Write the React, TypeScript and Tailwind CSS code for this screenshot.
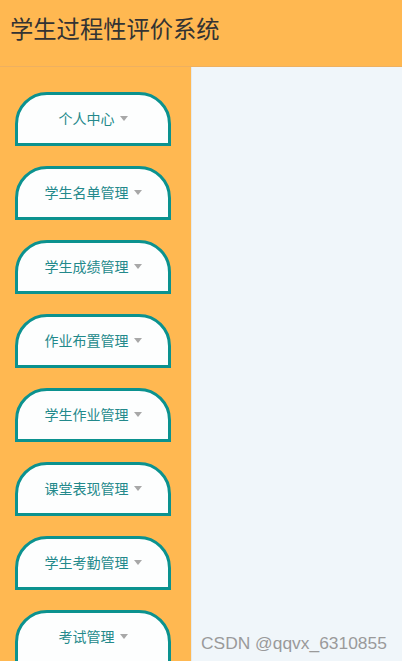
import { useState } from 'react';

const menus = [
  '个人中心',
  '学生名单管理',
  '学生成绩管理',
  '作业布置管理',
  '学生作业管理',
  '课堂表现管理',
  '学生考勤管理',
  '考试管理',
];

function MenuButton({ label }: { label: string }) {
  const [open, setOpen] = useState(false);
  return (
    <button
      onClick={() => setOpen(!open)}
      className="w-[156px] h-[54px] shrink-0 bg-[#fdfefe] border-[3px] border-[#0b928f] rounded-t-[32px] flex items-start justify-center pt-[13px] gap-[5px] text-[14px] text-[#23898b]"
    >
      <span className="leading-[20px]">{label}</span>
      <span className="mt-[8px] w-0 h-0 border-l-[4px] border-r-[4px] border-t-[5px] border-l-transparent border-r-transparent border-t-[#a8a8a8]" />
    </button>
  );
}

export default function App() {
  return (
    <div
      className="w-[402px] h-[661px] overflow-hidden flex flex-col bg-[#ffb851] relative"
      style={{ fontFamily: '"Noto Sans CJK SC", "Noto Sans", sans-serif' }}
    >
      <header className="h-[67px] shrink-0 flex items-center pl-[10px] pb-[10px] border-b border-[#eeb060]">
        <h1 className="text-[23.3px] text-[#333333] leading-[32px]">学生过程性评价系统</h1>
      </header>
      <div className="flex flex-1 min-h-0">
        <aside className="w-[191px] shrink-0 flex flex-col gap-[20px] pt-[25px] pl-[15px] overflow-hidden">
          {menus.map((m) => (
            <MenuButton key={m} label={m} />
          ))}
        </aside>
        <main className="flex-1 bg-[#f0f6fa] border-l border-[#e4eaee]" />
      </div>
      <div
        className="absolute left-[201px] top-[632px] text-[17.4px] text-[#9a9a9a] leading-[22px]"
        style={{ fontFamily: '"Liberation Sans", Arial, sans-serif' }}
      >
        CSDN @qqvx_6310855
      </div>
    </div>
  );
}
